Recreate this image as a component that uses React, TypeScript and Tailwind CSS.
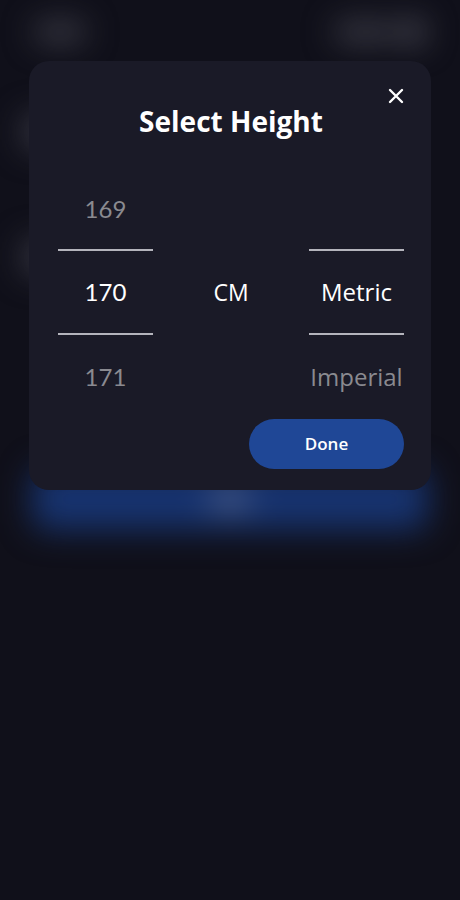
const font = { fontFamily: "Lato, 'Noto Sans', sans-serif" };
const wide = { fontFamily: "'Open Sans', 'Noto Sans', sans-serif" };

const Cell = ({ text, active, w, h }: { text?: string; active?: boolean; w?: boolean; h: string }) => (
  <div
    style={w ? wide : undefined}
    className={`${h} flex items-center justify-center text-[24px] ${
      active ? "text-white border-y-2 border-[#b4b4bc]" : "text-[#8a8a90]"
    }`}
  >
    {text}
  </div>
);

export default function App() {
  return (
    <div className="relative w-full h-[900px] overflow-hidden bg-[#10101a]" style={font}>
      {/* blurred page behind */}
      <div className="blur-lg">
        <div className="flex justify-between items-center px-9 pt-5">
          <div className="w-12 h-4 rounded bg-[#4a4a55]" />
          <div className="flex items-center gap-2">
            <div className="w-14 h-4 rounded bg-[#4a4a55]" />
            <div className="w-6 h-6 rounded-full bg-[#5a5a66]" />
          </div>
        </div>
        <div className="px-6 pt-[72px] flex flex-col gap-[93px]">
          <div className="w-40 h-8 rounded bg-[#3a3a46]" />
          <div className="w-40 h-8 rounded bg-[#3a3a46]" />
        </div>
        <div className="mx-8 mt-[195px] h-[62px] rounded-2xl bg-[#17336f] flex items-center justify-center">
          <div className="w-10 h-4 rounded bg-[#5a6a90]" />
        </div>
      </div>

      {/* modal */}
      <div className="absolute left-[29px] top-[61px] w-[402px] h-[429px] rounded-[20px] bg-[#1a1a27] pl-[29px] pr-[27px] pt-[43px]">
        <button className="absolute top-[27px] right-[27px] w-[16px] h-[16px] text-white">
          <svg viewBox="0 0 16 16" className="w-full h-full" fill="none" stroke="currentColor" strokeWidth="2.4" strokeLinecap="round">
            <path d="M2 2L14 14M14 2L2 14" />
          </svg>
        </button>
        <h2 style={wide} className="text-center text-white text-[28px] leading-[34px] font-bold">
          Select Height
        </h2>
        <div className="mt-[31px] grid grid-cols-[95px_1fr_95px]">
          <div className="flex flex-col">
            <Cell h="h-[80px]" text="169" />
            <Cell h="h-[86px]" text="170" active />
            <Cell h="h-[84px]" text="171" />
          </div>
          <div className="flex flex-col">
            <Cell h="h-[80px]" />
            <div style={wide} className="h-[86px] flex items-center justify-center text-[23px] text-white">CM</div>
            <Cell h="h-[84px]" />
          </div>
          <div className="flex flex-col">
            <Cell h="h-[80px]" />
            <Cell h="h-[86px]" text="Metric" active w />
            <Cell h="h-[84px]" text="Imperial" w />
          </div>
        </div>
        <div className="flex justify-end">
          <button style={wide} className="w-[155px] h-[50px] rounded-full bg-[#1f4796] text-white text-[17px] font-semibold">
            Done
          </button>
        </div>
      </div>
    </div>
  );
}
